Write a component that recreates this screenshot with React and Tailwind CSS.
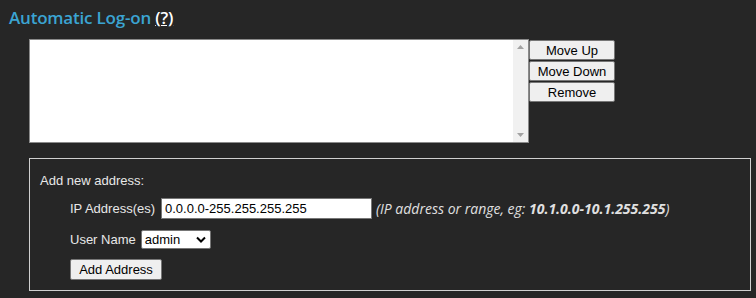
export default function App() {
  const btn =
    "h-[20px] w-[86px] border border-[#767676] bg-[#efefef] text-[13px] leading-none text-black rounded-[2px] font-['Liberation_Sans',Arial,sans-serif]";
  return (
    <div className="w-[756px] h-[298px] bg-[#262626] overflow-hidden font-['Liberation_Sans',Arial,sans-serif] text-[13px] text-[#e8e8e8]">
      <h2 className="pl-[9px] pt-[5px] h-[39px] text-[17px] font-semibold text-[#3ba4d2] font-['Open_Sans',sans-serif] tracking-[-0.2px]">
        Automatic Log-on{" "}
        <span className="text-white underline">(?)</span>
      </h2>

      <div className="flex pl-[29px]">
        <div className="flex w-[500px] h-[104px] border border-[#8a8a8a] bg-white">
          <div className="flex-1" />
          <div className="w-[15px] bg-[#f1f1f1] flex flex-col items-center justify-between py-[5px]">
            <svg width="7" height="4" viewBox="0 0 7 4">
              <path d="M0 4 L3.5 0 L7 4 Z" fill="#a3a3a3" />
            </svg>
            <svg width="7" height="4" viewBox="0 0 7 4">
              <path d="M0 0 L3.5 4 L7 0 Z" fill="#a3a3a3" />
            </svg>
          </div>
        </div>
        <div className="flex flex-col gap-[1px] pt-[1px]">
          <button className={btn}>Move Up</button>
          <button className={btn}>Move Down</button>
          <button className={btn}>Remove</button>
        </div>
      </div>

      <div className="ml-[29px] mt-[15px] w-[722px] h-[133px] border border-[#d0d0d0] pl-[10px] pt-[12px]">
        <div className="h-[18px]">Add new address:</div>
        <div className="pl-[30px] mt-[9px] flex items-center h-[21px]">
          <span>IP Address(es)</span>
          <input
            readOnly
            value="0.0.0.0-255.255.255.255"
            className="ml-[6px] w-[211px] h-[21px] border border-[#767676] bg-white text-black px-[3px] text-[13px] outline-none"
          />
          <span className="ml-[4px] italic font-['Open_Sans',sans-serif] text-[14px] text-[#e0e0e0]">
            (IP address or range, eg: <b>10.1.0.0-10.1.255.255</b>)
          </span>
        </div>
        <div className="pl-[30px] mt-[11px] flex items-center h-[19px]">
          <span>User Name</span>
          <div className="ml-[5px] w-[70px] h-[19px] bg-white border border-[#767676] rounded-[2px] text-black flex items-center justify-between pl-[3px] pr-[4px]">
            <span>admin</span>
            <svg width="10" height="7" viewBox="0 0 10 7">
              <path d="M1 1.5 L5 5.5 L9 1.5" stroke="#000" strokeWidth="2" fill="none" />
            </svg>
          </div>
        </div>
        <div className="pl-[30px] mt-[10px]">
          <button className="h-[21px] w-[92px] border border-[#767676] bg-[#efefef] text-[13px] leading-none text-black rounded-[2px]">
            Add Address
          </button>
        </div>
      </div>
    </div>
  );
}
